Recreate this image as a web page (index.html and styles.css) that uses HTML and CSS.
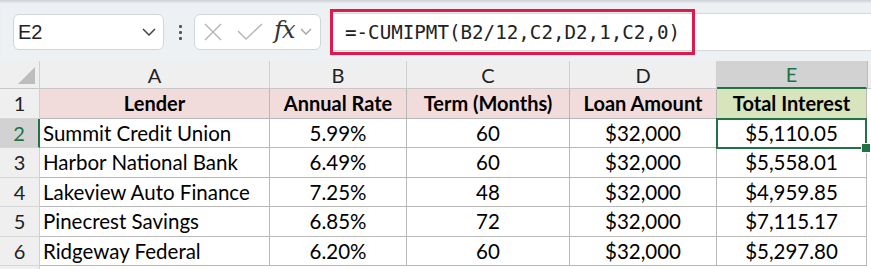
FILE: index.html
```html
<!DOCTYPE html>
<html lang="en">
  <head>
    <meta charset="UTF-8" />
    <title>Loan Interest Sheet</title>
    <link rel="stylesheet" href="styles.css">
  </head>
  <body>
    <div class="toolbar">
      <div class="namebox">
        <span>E2</span>
        <svg class="chev" width="14" height="8" viewBox="0 0 14 8"><path d="M1 1 L7 7 L13 1" fill="none" stroke="#444" stroke-width="1.5"/></svg>
      </div>
      <div class="dots"><i></i><i></i><i></i></div>
      <div class="fxbox">
        <svg width="18" height="18" viewBox="0 0 18 18"><path d="M1 1 L17 17 M17 1 L1 17" stroke="#b4b4b4" stroke-width="1.4"/></svg>
        <svg width="26" height="18" viewBox="0 0 26 18"><path d="M1 8 L9 16 L25 1" fill="none" stroke="#b4b4b4" stroke-width="1.4"/></svg>
        <span class="fx">fx</span>
        <svg width="12" height="8" viewBox="0 0 12 8"><path d="M1 1 L6 6 L11 1" fill="none" stroke="#a0a0a0" stroke-width="1.3"/></svg>
      </div>
      <div class="formula">
        <span class="hl">=-CUMIPMT(B2/12,C2,D2,1,C2,0)</span>
      </div>
    </div>

    <div class="sheet">
      <div class="corner"><span class="tri"></span></div>
      <div class="colhdr">A</div>
      <div class="colhdr">B</div>
      <div class="colhdr">C</div>
      <div class="colhdr">D</div>
      <div class="colhdr sel">E</div>
      <div class="colhdr last"></div>

      <div class="rowhdr">1</div>
      <div class="cell head">Lender</div>
      <div class="cell head">Annual Rate</div>
      <div class="cell head">Term (Months)</div>
      <div class="cell head">Loan Amount</div>
      <div class="cell head total">Total Interest</div>
      <div class="blank"></div>

      <div class="rowhdr sel">2</div>
      <div class="cell left">Summit Credit Union</div>
      <div class="cell">5.99%</div>
      <div class="cell">60</div>
      <div class="cell">$32,000</div>
      <div class="cell active">$5,110.05<span class="handle"></span></div>
      <div class="blank"></div>

      <div class="rowhdr">3</div>
      <div class="cell left">Harbor National Bank</div>
      <div class="cell">6.49%</div>
      <div class="cell">60</div>
      <div class="cell">$32,000</div>
      <div class="cell">$5,558.01</div>
      <div class="blank"></div>

      <div class="rowhdr">4</div>
      <div class="cell left">Lakeview Auto Finance</div>
      <div class="cell">7.25%</div>
      <div class="cell">48</div>
      <div class="cell">$32,000</div>
      <div class="cell">$4,959.85</div>
      <div class="blank"></div>

      <div class="rowhdr">5</div>
      <div class="cell left">Pinecrest Savings</div>
      <div class="cell">6.85%</div>
      <div class="cell">72</div>
      <div class="cell">$32,000</div>
      <div class="cell">$7,115.17</div>
      <div class="blank"></div>

      <div class="rowhdr">6</div>
      <div class="cell left">Ridgeway Federal</div>
      <div class="cell">6.20%</div>
      <div class="cell">60</div>
      <div class="cell">$32,000</div>
      <div class="cell">$5,297.80</div>
      <div class="blank"></div>

      <div class="rowhdr"></div>
    </div>
  </body>
</html>
```

FILE: styles.css
```css
body {
  margin: 0;
  width: 871px;
  height: 269px;
  overflow: hidden;
  background: #ffffff;
  font-family: Lato, "Open Sans", sans-serif;
  color: #000;
}
.toolbar {
  display: flex;
  align-items: center;
  height: 58px;
  padding-top: 3px;
  background: #eef1f4;
  box-shadow: inset 0 3px 2px -1px #cfd3d7;
}
.namebox {
  box-sizing: border-box;
  display: flex;
  align-items: center;
  justify-content: space-between;
  width: 151px;
  height: 36px;
  margin-left: 13px;
  padding: 0 7px 0 4px;
  background: #fff;
  border: 1px solid #d3d6d9;
  border-radius: 6px;
  font-family: "Liberation Sans", sans-serif;
  font-size: 20px;
  color: #222;
}
.dots {
  display: flex;
  flex-direction: column;
  gap: 3px;
  margin: 0 12px 0 15px;
}
.dots i {
  width: 3px;
  height: 3px;
  background: #555;
  border-radius: 1px;
}
.fxbox {
  box-sizing: border-box;
  display: flex;
  align-items: center;
  width: 127px;
  height: 36px;
  padding: 0 6px 0 9px;
  background: #fff;
  border: 1px solid #d3d6d9;
  border-radius: 6px;
}
.fxbox svg:nth-child(2) {
  margin-left: 15px;
}
.fx {
  margin: -4px 6px 0 11px;
  font-family: "DejaVu Serif", serif;
  font-style: italic;
  font-size: 24px;
  letter-spacing: -1px;
  color: #333;
}
.formula {
  display: flex;
  align-items: center;
  flex: 1;
  height: 36px;
  margin-left: 11px;
  background: #fff;
  border-top: 1px solid #d6d9dc;
  border-bottom: 1px solid #d6d9dc;
}
.hl {
  box-sizing: border-box;
  display: flex;
  align-items: center;
  width: 365px;
  height: 46px;
  margin-left: -2px;
  padding-left: 12px;
  border: 3px solid #e0184b;
  font-family: "DejaVu Sans Mono", monospace;
  font-size: 19.2px;
  color: #222;
}
.sheet {
  display: grid;
  grid-template-columns: 40px 230px 137px 163px 147px 150px 1fr;
  grid-template-rows: 28px repeat(6, 29.5px) 10px;
}
.corner,
.colhdr,
.rowhdr {
  box-sizing: border-box;
  background: #efefef;
  border-right: 1px solid #d0d0d0;
  border-bottom: 1px solid #c8c8c8;
  color: #222;
  font-family: Lato, sans-serif;
  font-size: 20px;
  display: flex;
  align-items: center;
  justify-content: center;
}
.corner {
  position: relative;
}
.tri {
  position: absolute;
  right: 4px;
  bottom: 4px;
  width: 0;
  height: 0;
  border-left: 17px solid transparent;
  border-bottom: 17px solid #bdbdbd;
}
.colhdr.sel {
  background: #d2d2d2;
  color: #217346;
  border-bottom: 2px solid #217346;
}
.colhdr.last {
  border-right: 0;
  border-left: 1px solid #bdbdbd;
}
.rowhdr {
  border-bottom-color: #d6d6d6;
}
.rowhdr.sel {
  background: #d2d2d2;
  color: #217346;
  border-right: 2px solid #217346;
}
.cell {
  box-sizing: border-box;
  display: flex;
  align-items: center;
  justify-content: center;
  border-right: 1px solid #b8b8b8;
  border-bottom: 1px solid #b8b8b8;
  font-size: 20.5px;
  white-space: nowrap;
}
.cell.left {
  justify-content: flex-start;
  padding-left: 3px;
}
.cell.head {
  background: #f2dcdb;
  font-weight: bold;
  font-size: 20px;
}
.cell.head.total {
  background: #d8e4bc;
}
.cell.active {
  position: relative;
  border: 2px solid #217346;
  margin: -1px 0 -1px -1px;
}
.handle {
  position: absolute;
  right: -6px;
  bottom: -6px;
  width: 8px;
  height: 8px;
  background: #217346;
  border: 1px solid #fff;
}
.blank {
  background: #fff;
}
```
